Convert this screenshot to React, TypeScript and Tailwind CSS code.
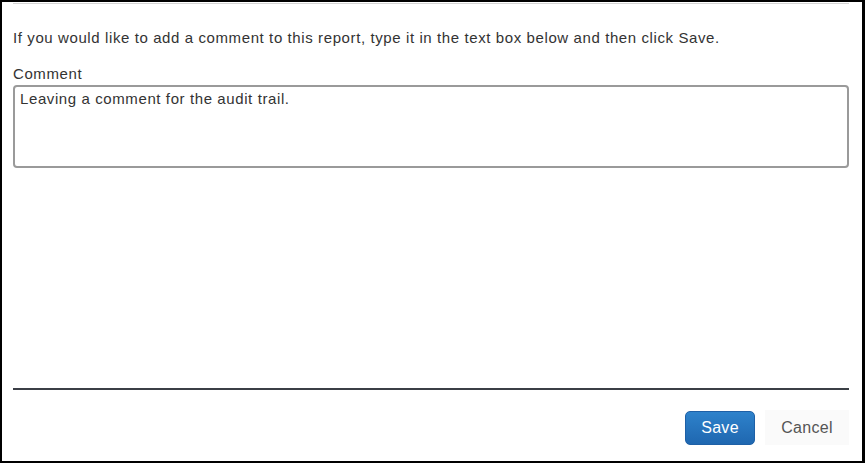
import React from "react";

export default function App() {
  return (
    <div
      className="w-[865px] h-[463px] bg-white border-t-2 border-l-2 border-b-2 border-r-[3px] border-black flex flex-col text-[#333333]"
      style={{ fontFamily: '"Liberation Sans", Arial, sans-serif' }}
    >
      <div className="ml-[11px] mr-[13px] mt-px h-px bg-[#d4d4d4]" />
      <div className="flex flex-col pl-[11px] pr-[13px] flex-1 tracking-[0.6px]">
        <p className="mt-[25px] text-[15px] leading-[18px]">
          If you would like to add a comment to this report, type it in the text box below and then click Save.
        </p>
        <label className="mt-[18px] text-[15px] leading-[18px]">Comment</label>
        <div className="mt-[2px] h-[83px] border-2 border-[#9a9a9a] rounded-[4px] px-[5px] pt-[3px] text-[15px] leading-[18px]">
          Leaving a comment for the audit trail.
        </div>
        <div className="mt-[220px] h-[2px] bg-[#3b3f46]" />
        <div className="mt-[20px] flex justify-end items-center gap-[10px] tracking-normal">
          <button className="w-[70px] h-[34px] rounded-[5px] border border-[#1e60a6] bg-gradient-to-b from-[#2e82cb] to-[#1f67b0] text-white text-[16px] tracking-[0.3px]">
            Save
          </button>
          <button className="w-[84px] h-[35px] bg-[#fafafa] text-[#555555] text-[16px] tracking-[0.3px]">
            Cancel
          </button>
        </div>
      </div>
    </div>
  );
}
